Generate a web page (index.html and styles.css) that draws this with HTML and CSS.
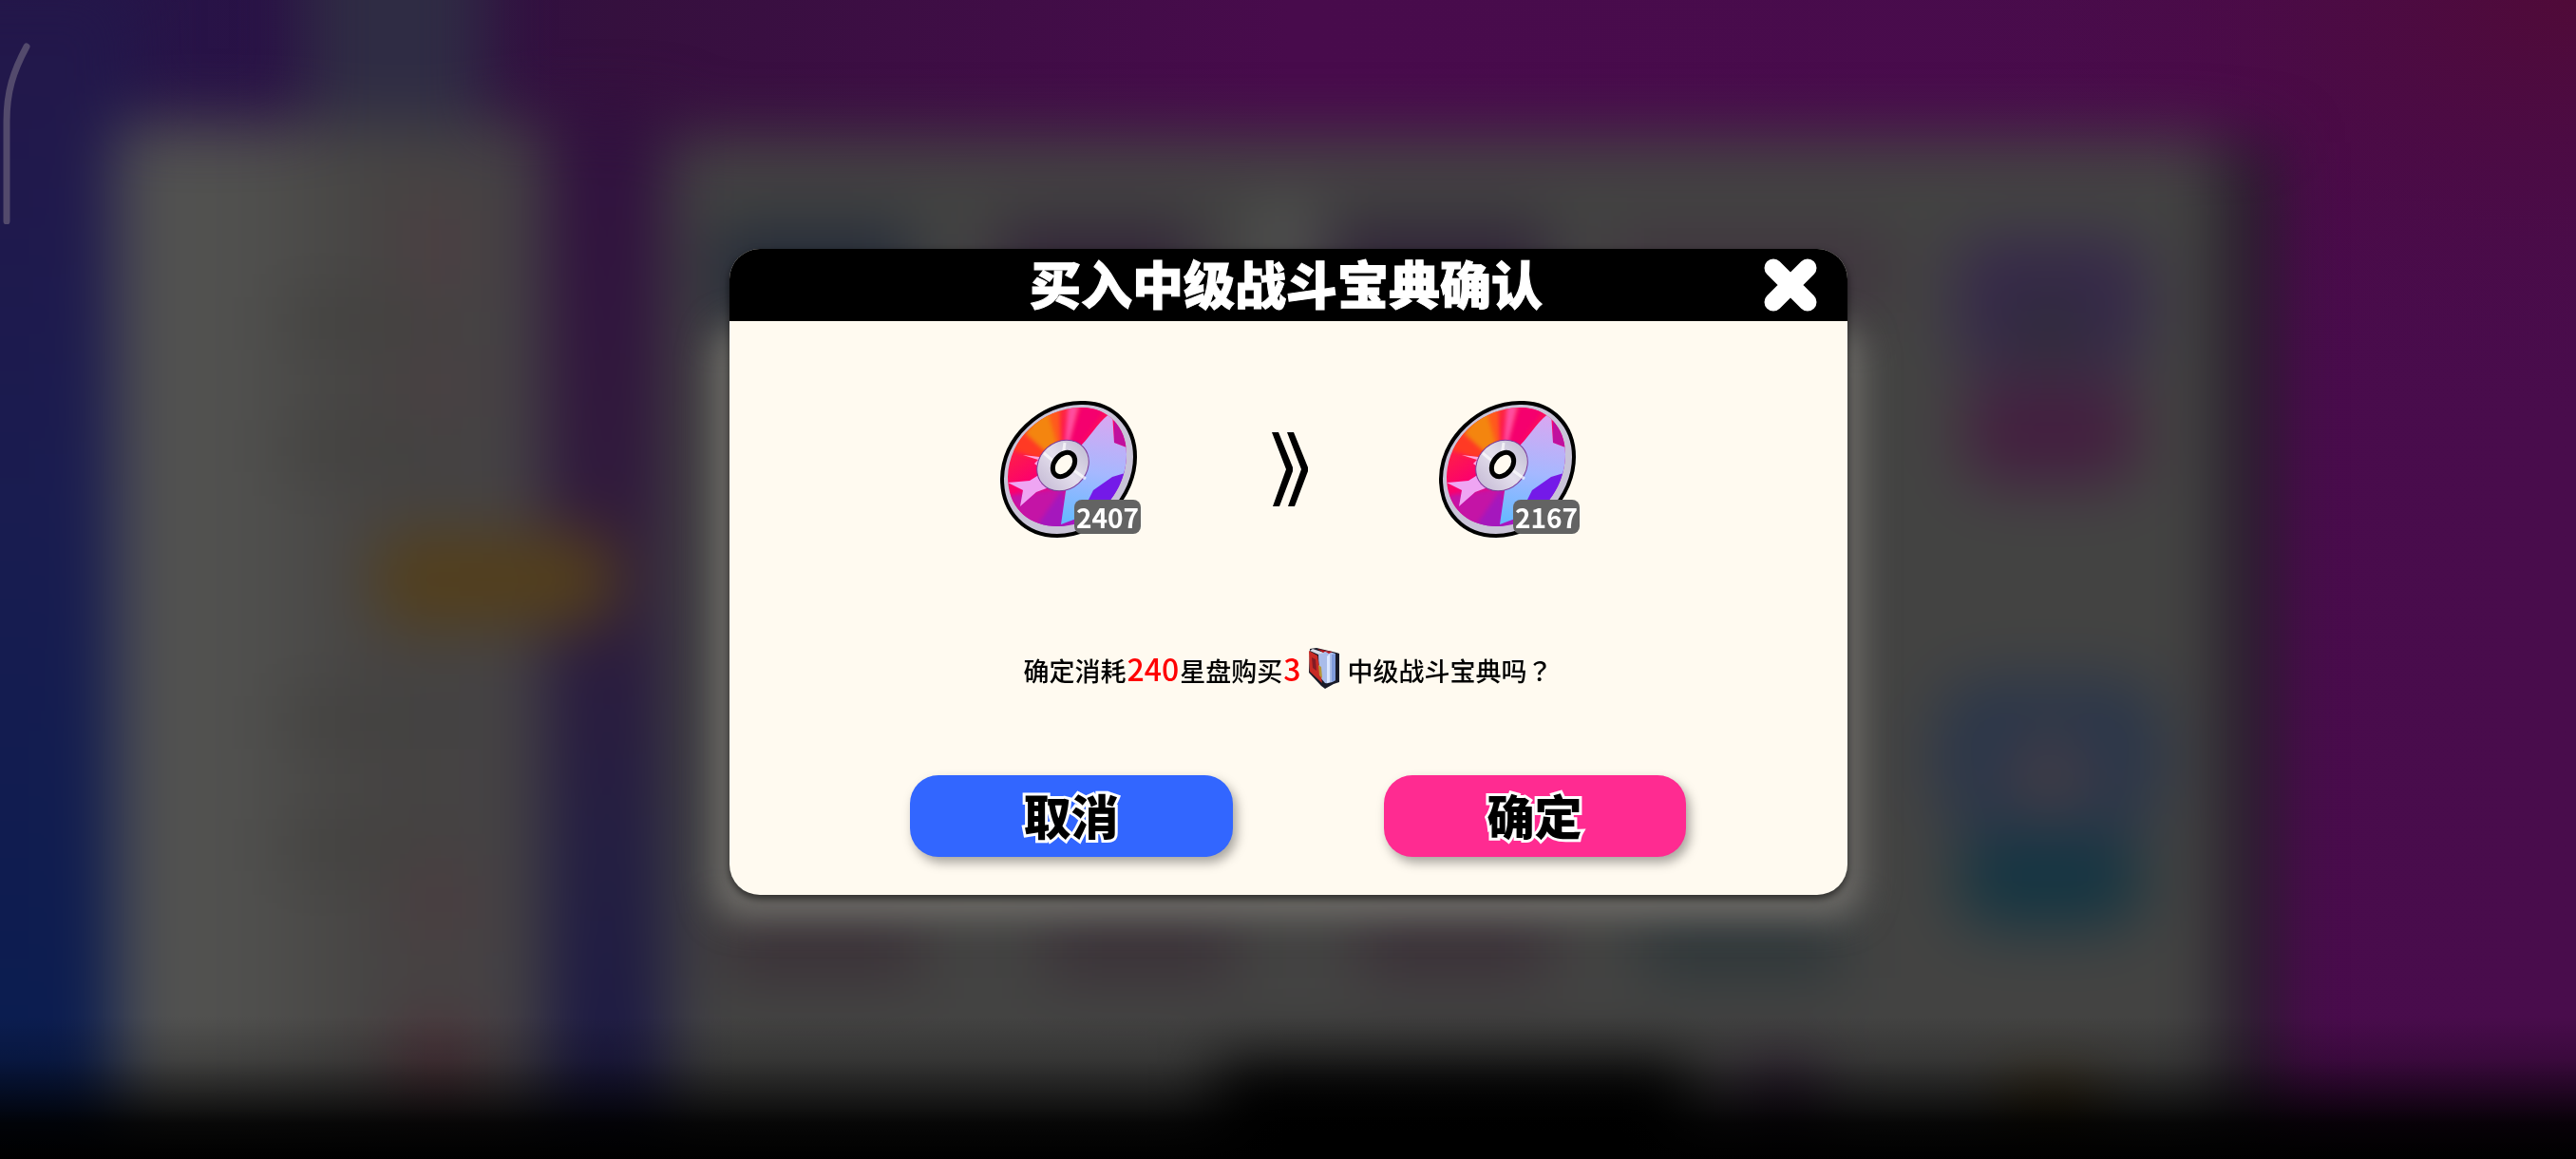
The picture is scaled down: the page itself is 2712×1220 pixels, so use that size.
FILE: index.html
```html
<!DOCTYPE html>
<html lang="zh-CN">
<head>
<meta charset="utf-8">
<meta name="viewport" content="width=device-width, initial-scale=1">
<title>买入中级战斗宝典确认</title>
<link rel="stylesheet" href="styles.css">
</head>
<body>
<svg class="scene" viewBox="0 0 2712 1220" preserveAspectRatio="none" aria-hidden="true">
  <defs>
    <linearGradient id="sky"><stop offset="0" stop-color="#24174a"/><stop offset=".1" stop-color="#291246"/><stop offset=".24" stop-color="#35103e"/><stop offset=".5" stop-color="#480b4c"/><stop offset="1" stop-color="#490c4c"/></linearGradient>
    <linearGradient id="left" x2="0" y2="1"><stop offset="0" stop-color="#24174a"/><stop offset=".4" stop-color="#191c50"/><stop offset=".9" stop-color="#071d50"/><stop offset="1" stop-color="#001c50"/></linearGradient>
    <linearGradient id="gutter" x2="0" y2="1"><stop offset="0" stop-color="#31103f"/><stop offset=".35" stop-color="#301a3c"/><stop offset=".65" stop-color="#231e42"/><stop offset="1" stop-color="#181844"/></linearGradient>
    <linearGradient id="side"><stop offset="0" stop-color="#535352"/><stop offset=".3" stop-color="#50504e"/><stop offset=".6" stop-color="#464443"/><stop offset="1" stop-color="#444144"/></linearGradient>
    <linearGradient id="fade" x2="0" y2="1"><stop offset="0" stop-color="#000" stop-opacity="0"/><stop offset=".3" stop-color="#000" stop-opacity=".2"/><stop offset=".75" stop-color="#000" stop-opacity=".9"/><stop offset="1" stop-color="#000"/></linearGradient>
    <radialGradient id="corner" cx="1" cy="0" r="1"><stop offset="0" stop-color="#500a38"/><stop offset="1" stop-color="#480b4c" stop-opacity="0"/></radialGradient>
    <filter id="soft" filterUnits="userSpaceOnUse" x="-200" y="-200" width="3112" height="1620" color-interpolation-filters="sRGB"><feGaussianBlur stdDeviation="33"/></filter>
    <filter id="glow" filterUnits="userSpaceOnUse" x="600" y="200" width="1500" height="900" color-interpolation-filters="sRGB"><feGaussianBlur stdDeviation="18"/></filter>
  </defs>
  <rect width="2712" height="1220" fill="url(#sky)"/>
  <rect x="2000" width="712" height="450" fill="url(#corner)"/>
  <g filter="url(#soft)">
    <rect x="-180" y="-20" width="320" height="1400" fill="url(#left)"/>
    <rect x="560" y="120" width="150" height="1200" fill="url(#gutter)"/>
    <rect x="320" y="-80" width="190" height="240" fill="#2f2c44"/>
    <rect x="2300" y="150" width="96" height="1180" fill="#261c2a"/>
    <rect x="122" y="130" width="452" height="1170" fill="url(#side)"/>
    <rect x="704" y="144" width="1632" height="1170" fill="#434342"/>
    <rect x="300" y="310" width="170" height="60" fill="#434240"/>
    <rect x="300" y="440" width="170" height="60" fill="#434240"/>
    <rect x="300" y="730" width="170" height="60" fill="#434240"/>
    <rect x="300" y="860" width="170" height="60" fill="#434240"/>
    <rect x="430" y="200" width="60" height="120" fill="#4c3f42"/>
    <rect x="430" y="370" width="60" height="70" fill="#4b3f42"/>
    <rect x="430" y="900" width="60" height="100" fill="#4b3d40"/>
    <rect x="420" y="1070" width="80" height="120" fill="#4c323a"/>
    <rect x="395" y="560" width="255" height="100" rx="30" fill="#533f1c"/>
    <rect x="750" y="235" width="210" height="110" fill="#252c39"/>
    <rect x="1050" y="235" width="210" height="90" fill="#322538"/>
    <rect x="1400" y="235" width="230" height="90" fill="#302438"/>
    <rect x="1700" y="240" width="290" height="90" fill="#40363f"/>
    <rect x="1330" y="220" width="50" height="60" fill="#575757"/>
    <rect x="2060" y="250" width="200" height="140" rx="30" fill="#36284a"/>
    <rect x="2070" y="400" width="180" height="110" rx="30" fill="#431f40"/>
    <circle cx="2158" cy="345" r="45" fill="#302c3c"/>
    <rect x="2040" y="715" width="236" height="165" rx="50" fill="#2a364a"/>
    <rect x="2060" y="880" width="196" height="96" rx="40" fill="#143542"/>
    <circle cx="2158" cy="818" r="48" fill="#413c46"/>
    <rect x="760" y="960" width="210" height="70" fill="#3a3037"/>
    <rect x="1100" y="960" width="200" height="70" fill="#3a3037"/>
    <rect x="1430" y="960" width="200" height="70" fill="#3a2f37"/>
    <rect x="1730" y="960" width="210" height="70" fill="#2d3639"/>
    <rect x="1280" y="1120" width="500" height="260" fill="#000"/>
    <rect x="1830" y="1120" width="90" height="160" fill="#2c1c31"/>
    <rect x="2110" y="1140" width="100" height="100" fill="#3a2c10"/>
  </g>
  <rect x="752" y="342" width="1208" height="624" rx="30" fill="#6f6d69" filter="url(#glow)"/>
  <rect y="1070" width="2712" height="150" fill="url(#fade)"/>
</svg>
<svg class="edge-mark" width="32" height="192" viewBox="0 0 32 192" aria-hidden="true"><path d="M28 5C14 31 7 52 7 84V189" fill="none" stroke="#534a6c" stroke-width="7" stroke-linecap="round"/></svg>

<svg class="symbols" aria-hidden="true">
  <defs>
    <linearGradient id="lens" x1=".6" y1="0" x2=".5" y2="1"><stop offset="0" stop-color="#dba6f0"/><stop offset=".55" stop-color="#a5b8ff"/><stop offset="1" stop-color="#68b9ff"/></linearGradient>
    <linearGradient id="base" x1=".2" y1=".1" x2=".75" y2="1"><stop offset="0" stop-color="#ff342d"/><stop offset=".4" stop-color="#fc006d"/><stop offset=".68" stop-color="#c413a8"/><stop offset="1" stop-color="#7a1bf0"/></linearGradient>
    <linearGradient id="ring"><stop offset="0" stop-color="#c9bfd8"/><stop offset=".5" stop-color="#e4dfec"/><stop offset="1" stop-color="#c5c1d6"/></linearGradient>
    <filter id="melt" color-interpolation-filters="sRGB"><feGaussianBlur stdDeviation="2"/></filter>
    <clipPath id="face"><path d="M84 7C112 6 133 26 133 56C133 94 103 132 61 132C29 132 8 112 8 80C9 40 44 8 84 7Z"/></clipPath>
    <symbol id="disc" viewBox="0 0 144 144">
      <path d="M85 2C119 1 142 26 142 59C142 101 104 142 60 142C26 142 2 117 2 82C3 39 41 3 85 2Z" fill="#c9c4d8" stroke="#000" stroke-width="4"/>
      <g clip-path="url(#face)">
        <rect width="144" height="144" fill="url(#base)"/>
        <g filter="url(#melt)">
          <path d="M66 70L8 50L28 22L48 10Z" fill="#ff3a24"/>
          <path d="M66 70L26 34L36 20L50 10L58 8Z" fill="#f4850f"/>
          <path d="M66 70L50 10L62 4Z" fill="#ff5a1c"/>
          <path d="M66 70L72 0L84 0Z" fill="#ff4ea0"/>
          <path d="M66 70L86 0L112 8Z" fill="#f5006e"/>
          <path d="M66 92L8 100L40 144L66 144Z" fill="#c414a6"/>
          <path d="M66 92L30 144L70 144Z" fill="#a517bd"/>
          <path d="M84 90L94 144L144 110L144 68Z" fill="#741ae8"/>
        </g>
        <path d="M144 0L120 4L120 44L144 52Z" fill="#c0109e"/>
        <path d="M86 46C96 36 106 18 118 12L120 44L136 50L138 74L118 80L98 94L90 110L80 124L64 130L70 88Z" fill="url(#lens)"/>
        <path d="M50 60L24 57L40 62L36 66L50 76Z" fill="#ffa7e0"/>
        <path d="M50 72L31 84L8 86L24 94L21 111L38 96L54 90Z" fill="#efa5f3"/>
      </g>
      <ellipse cx="66" cy="68" rx="29" ry="25" transform="rotate(-42 66 68)" fill="url(#ring)" stroke="#7c3b99" stroke-width="1"/>
      <path d="M46 55L58 65M68 44L66 58M90 82L76 72" stroke="#fff" stroke-width="3" opacity=".7"/>
      <ellipse cx="67" cy="67" rx="14" ry="10" transform="rotate(-52 67 67)" fill="#fffaf0" stroke="#000" stroke-width="5"/>
    </symbol>
  </defs>
</svg>

<main class="stage">
  <section class="dialog" role="dialog" aria-modal="true" aria-labelledby="title">
    <header class="dialog-head">
      <h1 class="dialog-title" id="title">买入中级战斗宝典确认</h1>
      <button class="close" type="button" aria-label="关闭"><svg width="56" height="56" viewBox="0 0 56 56"><path d="M10 10L46 46M46 10L10 46" stroke="#fff" stroke-width="19" stroke-linecap="round"/></svg></button>
    </header>
    <div class="dialog-body">
      <div class="exchange">
        <div class="item"><svg class="disc"><use href="#disc"/></svg><span class="count">2407</span></div>
        <svg class="arrow" viewBox="0 0 38 78" aria-hidden="true"><path d="M0 0H7L22 37V41L8 78H1L15 39ZM16 0H23L38 37V41L24 78H17L31 39Z"/></svg>
        <div class="item"><svg class="disc"><use href="#disc"/></svg><span class="count">2167</span></div>
      </div>
      <p class="message">确定消耗<strong class="amount">240</strong>星盘购买<strong class="amount">3</strong><svg class="book" viewBox="0 0 34 43" aria-hidden="true"><path d="M2 1L9 0L30 5L33 6V36L27 38L18 43L14 40L1 26Z" fill="#191b28"/><path d="M11 7L19 3L29 6L29 34Q24 38 18 37L12 30Z" fill="#a9bce9"/><path d="M20 9L23 6V36L20 37Z" fill="#dce7ff"/><path d="M25 7L29 6V34L25 36Z" fill="#809bdb"/><path d="M1 3L10 8L15 37L2 25Z" fill="#c82a25"/><path d="M5 1L17 5L11 7L2 3Z" fill="#d9dbe6"/><path d="M10 1L19 3L16 5ZM17 3L26 4L22 6Z" fill="#b9171d"/><path d="M4 10L8 12L9 24L5 21Z" fill="#821b25"/><path d="M11 18L14 20L15 32L12 29Z" fill="#b79538"/></svg>中级战斗宝典吗<span class="mark" lang="zh-TW">？</span></p>
      <div class="actions">
        <button class="action cancel" type="button">取消</button>
        <button class="action confirm" type="button">确定</button>
      </div>
    </div>
  </section>
</main>
</body>
</html>
```
FILE: styles.css
```css
* { box-sizing: border-box; }

body {
  margin: 0;
  background: #000;
  color: #000;
  font-family: "Noto Sans CJK SC", sans-serif;
}

.scene {
  position: fixed;
  inset: 0;
  width: 100%;
  height: 100%;
}

.edge-mark {
  position: absolute;
  top: 44px;
  left: 0;
}

.symbols {
  position: absolute;
  width: 0;
  height: 0;
}

.stage {
  position: relative;
  display: grid;
  place-items: center;
  min-height: 100vh;
  padding: 24px 24px 40px;
}

.dialog {
  width: 100%;
  max-width: 1177px;
  border-radius: 32px;
  background: #fffaf0;
  box-shadow: 0 4px 8px rgb(0 0 0 / 60%);
}

.dialog-head {
  display: grid;
  grid-template-columns: 84px 1fr 88px;
  align-items: center;
  height: 76px;
  border-radius: 32px 32px 0 0;
  background: #000;
  color: #fff;
}

.dialog-title {
  grid-column: 2;
  margin: 0;
  padding-bottom: 4px;
  font-size: 54px;
  font-weight: 900;
  line-height: 72px;
  text-align: center;
  -webkit-text-stroke: 1px #fff;
}

.close {
  display: flex;
  width: 56px;
  padding: 0;
  border: 0;
  background: none;
}

.dialog-body {
  display: flex;
  flex-direction: column;
  padding: 84px 0 40px;
}

.exchange {
  display: flex;
  justify-content: center;
  align-items: center;
  gap: 138px;
  padding-left: 4px;
}

.item {
  position: relative;
  width: 148px;
  height: 144px;
}

.disc {
  display: block;
  width: 144px;
  height: 144px;
}

.count {
  position: absolute;
  right: 0;
  bottom: 4px;
  padding: 0 2px;
  border-radius: 8px;
  background: #636363;
  color: #fff;
  font-size: 28px;
  font-weight: 700;
  line-height: 36px;
}

.arrow {
  width: 38px;
  height: 78px;
}

.message {
  margin: 108px 0 78px;
  font-size: 27px;
  font-weight: 500;
  line-height: 64px;
  text-align: center;
}

.mark {
  font-family: "Noto Sans CJK TC", sans-serif;
}

.amount {
  padding: 0 1px;
  color: #f00;
  font-size: 32px;
  font-weight: 500;
  line-height: 32px;
}

.book {
  width: 34px;
  height: 43px;
  margin: 0 7px;
  vertical-align: -8px;
}

.actions {
  display: flex;
  justify-content: space-between;
  padding: 0 170px 0 190px;
}

.action {
  height: 86px;
  padding: 0 0 4px;
  border: 0;
  border-radius: 30px;
  box-shadow: 4px 6px 12px rgb(0 0 0 / 35%);
  color: #000;
  font-family: inherit;
  font-size: 50px;
  font-weight: 900;
  line-height: 80px;
  -webkit-text-stroke: 6px #fff;
  paint-order: stroke fill;
}

.cancel {
  width: 340px;
  background: #3266ff;
}

.confirm {
  width: 318px;
  background: #ff2b91;
}
```
